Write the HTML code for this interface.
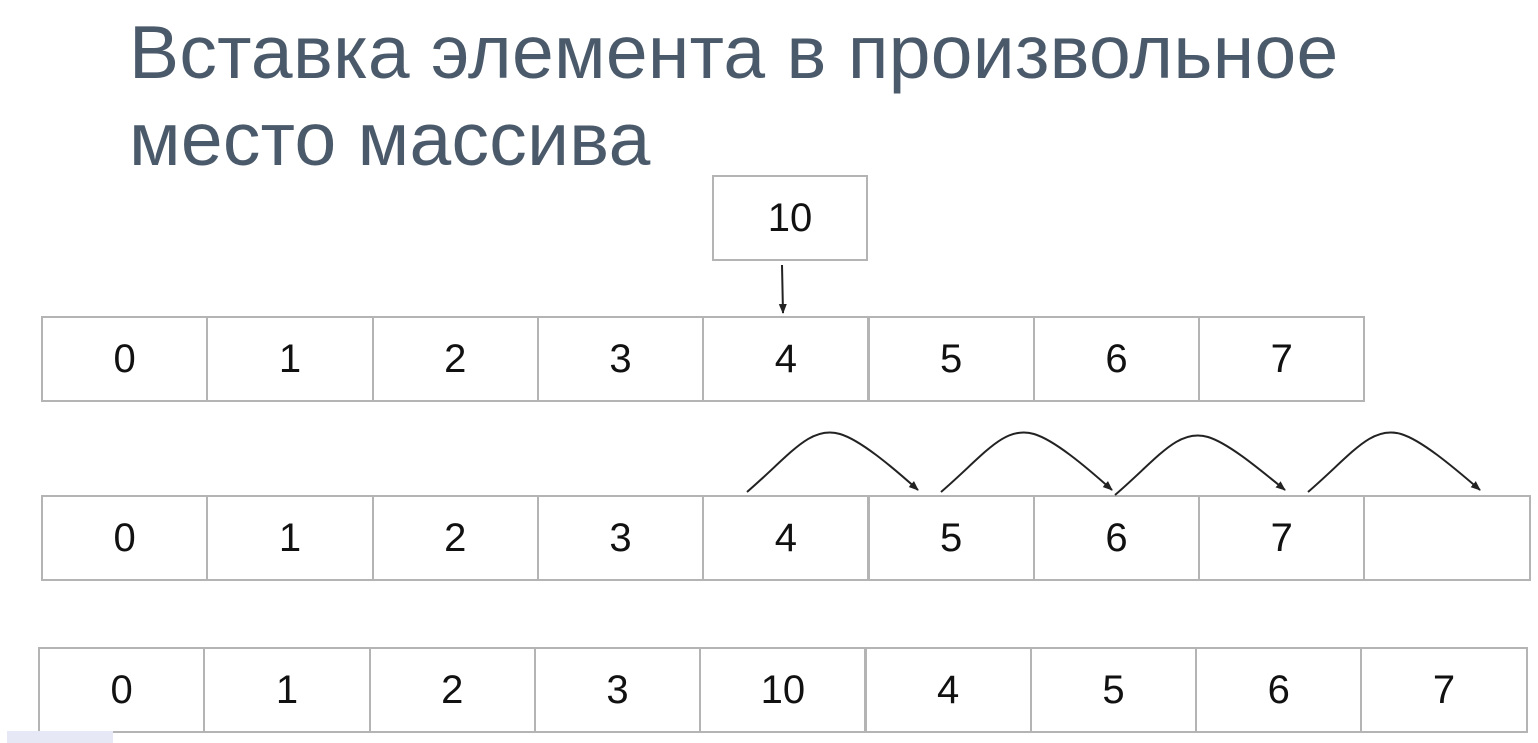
<!DOCTYPE html><html><head><style>
body{margin:0;width:1538px;height:743px;background:#fff;position:relative;overflow:hidden;font-family:"Liberation Sans",sans-serif}
.t{position:absolute;left:129px;color:#4b5a6b;font-size:75px;line-height:1;letter-spacing:0.3px}
.c{position:absolute;box-sizing:border-box;border:2px solid #b4b4b4;display:flex;align-items:center;justify-content:center;font-size:40px;color:#111}
</style></head><body>
<div class="t" style="top:15px">Вставка элемента в произвольное</div>
<div class="t" style="top:102px">место массива</div>
<div class="c" style="left:712px;top:175px;width:156px;height:86px">10</div>
<div id="r"></div>
<svg style="position:absolute;left:0;top:0" width="1538" height="743">
<defs><marker id="a" markerWidth="10" markerHeight="10" refX="9" refY="5" orient="auto" markerUnits="userSpaceOnUse"><path d="M0,1 L10,5 L0,9z" fill="#222"/></marker></defs>
<g fill="none" stroke="#222" stroke-width="2" marker-end="url(#a)">
<path d="M782,265 L783,313"/>
<path d="M747,492 C790,455 810,425 840,434 C860,440 890,465 918,490"/>
<path d="M941,492 C984,455 1004,425 1034,434 C1054,440 1084,465 1112,490"/>
<path d="M1115,495 C1158,458 1178,428 1208,437 C1228,443 1258,468 1285,490"/>
<path d="M1308,492 C1351,455 1371,425 1401,434 C1421,440 1451,465 1480,490"/>
</g></svg>
<div style="position:absolute;left:7px;top:731px;width:106px;height:12px;background:#e6e9f5"></div>
<script>
var rows=[[41,316,['0','1','2','3','4','5','6','7']],[41,495,['0','1','2','3','4','5','6','7','']],[38,647,['0','1','2','3','10','4','5','6','7']]];
var h='';rows.forEach(function(r){r[2].forEach(function(v,i){h+='<div class="c" style="left:'+(r[0]+i*165.3)+'px;top:'+r[1]+'px;width:167.3px;height:86px">'+v+'</div>';});});
document.getElementById('r').innerHTML=h;
</script>
</body></html>
